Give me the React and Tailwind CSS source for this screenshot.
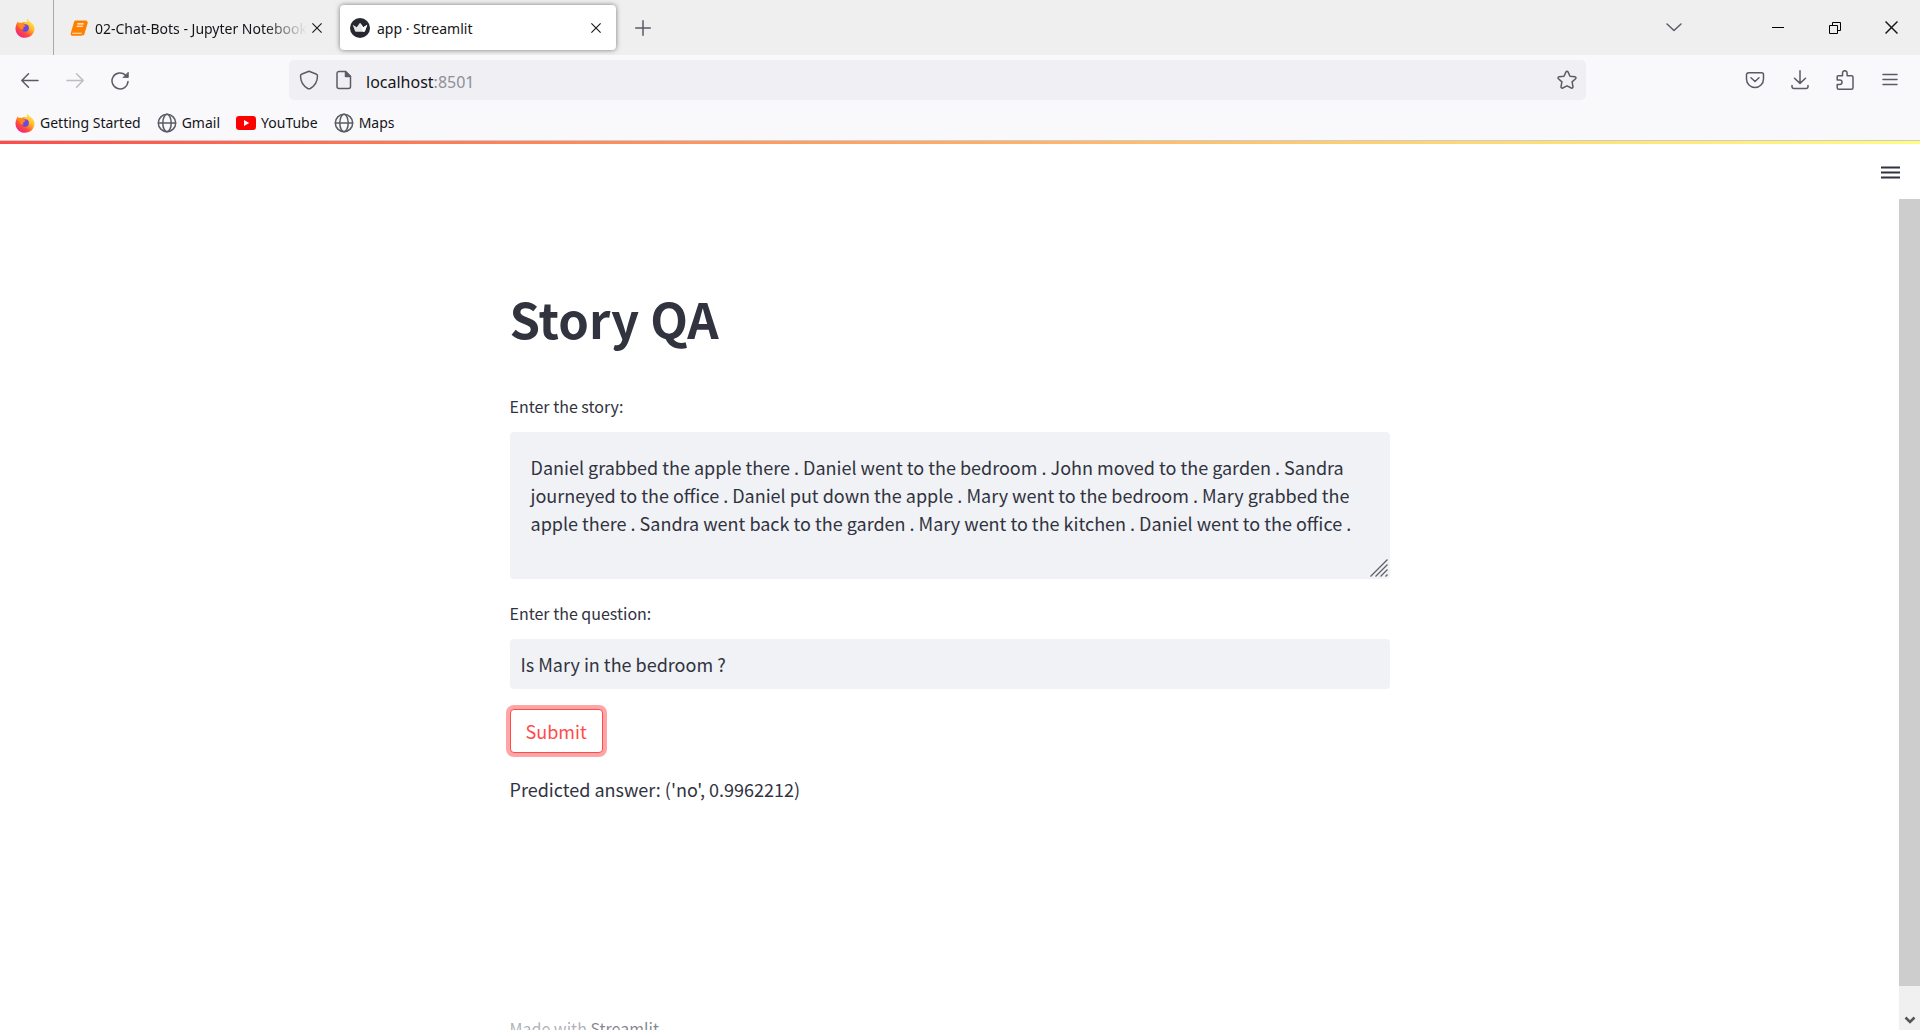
import React, { useState } from "react";

const STORY =
  "Daniel grabbed the apple there . Daniel went to the bedroom . John moved to the garden . Sandra journeyed to the office . Daniel put down the apple . Mary went to the bedroom . Mary grabbed the apple there . Sandra went back to the garden . Mary went to the kitchen . Daniel went to the office .";

function Svg({ size = 20, width = 1.5, children, className = "" }) {
  return (
    <svg
      width={size}
      height={size}
      viewBox="0 0 20 20"
      fill="none"
      stroke="currentColor"
      strokeWidth={width}
      strokeLinecap="round"
      strokeLinejoin="round"
      className={"shrink-0 " + className}
      aria-hidden="true"
    >
      {children}
    </svg>
  );
}

function FirefoxLogo() {
  return (
    <svg width="20" height="20" viewBox="0 0 20 20" className="shrink-0" aria-hidden="true">
      <defs>
        <linearGradient id="ffBody" x1="0.85" y1="0.05" x2="0.2" y2="0.95">
          <stop offset="0" stopColor="#fff44f" />
          <stop offset="0.4" stopColor="#ffb52a" />
          <stop offset="0.7" stopColor="#ff4b3a" />
          <stop offset="1" stopColor="#f0208c" />
        </linearGradient>
        <linearGradient id="ffGlobe" x1="0.7" y1="0" x2="0.3" y2="1">
          <stop offset="0" stopColor="#8a3ae8" />
          <stop offset="1" stopColor="#5a4fd8" />
        </linearGradient>
      </defs>
      <path
        d="M12.800 0.400c0.300 1.700 1.400 2.600 2.500 3.700l0.500-0.600c0.300 0.900 0.900 1.500 1.400 2.300l0.500-0.300c1 1.600 1.800 3.300 1.800 5.300 0 5-4.200 9-9.500 9S0.500 15.800 0.500 10.700C0.500 8.700 1 6.500 2 5l0.300-1.700 1.400 1.500 2.800 0.200C7.400 4.500 8.500 4 9.700 4c1.300 0 2 0.100 2.700 0.400C11.500 3 11.700 1.500 12.800 0.400z"
        fill="url(#ffBody)"
      />
      <circle cx="10.200" cy="10" r="3.700" fill="url(#ffGlobe)" />
      <path
        d="M2.500 5.500c1.500-0.900 3-0.900 4.300-0.300 0.900-0.700 2-0.900 3.400-0.700-1.300 0.700-1.900 1.500-1.900 2.400 0.700 0.300 1.700 0.300 2.300 0.500-0.200 1-1.400 1.300-2.200 1.900-0.300 0.800-0.400 1.500 0.300 2.400-2.300 0-4.200-1.700-4.700-3.500z"
        fill="#ff8a16"
      />
    </svg>
  );
}

function JupyterBook() {
  return (
    <svg width="18" height="18" viewBox="0 0 18 18" className="shrink-0" aria-hidden="true">
      <path
        d="M6 1.500h9.800c1 0 1.600 0.700 1.300 1.600L13.900 14c-0.500 1.800-1.300 2.800-2.900 2.800H2.600C1.200 16.800 0.300 15.400 0.800 13.900L4 3C4.300 2 5 1.500 6 1.500z"
        fill="#ff8000"
      />
      <path d="M7.300 4.900h6.300M6.600 7.300h6.300" stroke="#fff" strokeWidth="1.100" />
      <path d="M2.300 14.300h9.400" stroke="#ffd9b0" strokeWidth="1.200" />
      <path d="M17 3.600L13.400 15.500" stroke="#ff8000" strokeWidth="1.600" strokeLinecap="round" />
    </svg>
  );
}

function StreamlitCrown() {
  return (
    <svg width="20" height="20" viewBox="0 0 20 20" className="shrink-0" aria-hidden="true">
      <circle cx="10" cy="10" r="10" fill="#262730" />
      <path d="M2.700 6.800l4 2.400L10 4.700l3.300 4.500 4-2.400-2.300 6.200c-0.200 0.500-0.500 0.700-1 0.700H6c-0.500 0-0.800-0.200-1-0.700z" fill="#e6e6e8" />
      <path d="M10 4.700l3.300 4.500 4-2.400-2.300 6.200c-0.200 0.500-0.500 0.700-1 0.700h-1z" fill="#fff" />
    </svg>
  );
}

function Globe() {
  return (
    <Svg className="text-[#5b5b66]">
      <circle cx="10" cy="10" r="8.700" />
      <ellipse cx="10" cy="10" rx="4.200" ry="8.700" />
      <path d="M1.500 10h17" />
    </Svg>
  );
}

function YouTube() {
  return (
    <svg width="20" height="14" viewBox="0 0 20 14" className="shrink-0" aria-hidden="true">
      <rect width="20" height="14" rx="3" fill="#f00" />
      <path d="M8 4l5.200 3L8 10z" fill="#fff" />
    </svg>
  );
}

function Cross({ size = 10 }) {
  return (
    <svg width={size} height={size} viewBox="0 0 10 10" stroke="currentColor" strokeWidth="1.100" className="shrink-0" aria-hidden="true">
      <path d="M0.400 0.400l9.200 9.200M9.600 0.400l-9.200 9.200" />
    </svg>
  );
}

function IconButton({ label, className = "", children }) {
  return (
    <button type="button" aria-label={label} className={"flex shrink-0 items-center justify-center " + className}>
      {children}
    </button>
  );
}

function TabStrip() {
  return (
    <div className="flex h-[55px] items-center bg-[#efefef] text-[#15141a]">
      <IconButton label="Firefox View" className="h-full w-[54px] border-r border-[#a9a9ad] pr-1">
        <FirefoxLogo />
      </IconButton>
      <div role="tab" className="flex w-[278px] shrink-0 items-center pl-4 text-sm">
        <JupyterBook />
        <span className="ml-[7px] w-[212px] overflow-hidden pt-[2px] whitespace-nowrap [mask-image:linear-gradient(to_right,black_80%,transparent)]">
          02-Chat-Bots - Jupyter Notebook
        </span>
        <IconButton label="Close tab" className="ml-1 h-5 w-3">
          <Cross />
        </IconButton>
      </div>
      <div
        role="tab"
        aria-selected="true"
        className="ml-2 flex h-[45px] w-[276px] shrink-0 items-center rounded bg-white pr-[14px] pl-[10px] text-sm shadow-[0_0_5px_rgba(0,0,0,0.5)]"
      >
        <StreamlitCrown />
        <span className="ml-[7px] flex-1 pt-[2px]">app · Streamlit</span>
        <IconButton label="Close tab" className="h-5 w-3">
          <Cross />
        </IconButton>
      </div>
      <IconButton label="New tab" className="ml-[17px] h-5 w-5 text-[#5b5b66]">
        <Svg>
          <path d="M10 2.700v14.600M2.700 10h14.600" />
        </Svg>
      </IconButton>
      <div className="flex-1" />
      <IconButton label="List all tabs" className="mr-[55px] h-10 w-10 text-[#5b5b66]">
        <Svg>
          <path d="M3 6l7 6.500L17 6" />
        </Svg>
      </IconButton>
      <IconButton label="Minimize" className="h-full w-[57px]">
        <svg width="12" height="12" stroke="#000" aria-hidden="true">
          <path d="M0 5.500h12" />
        </svg>
      </IconButton>
      <IconButton label="Restore" className="h-full w-[57px]">
        <svg width="12" height="12" stroke="#000" fill="none" aria-hidden="true">
          <path d="M0.500 3.500h8v8h-8zM3.500 3.500v-3h8v8h-3" />
        </svg>
      </IconButton>
      <IconButton label="Close window" className="h-full w-[57px]">
        <Cross size={13} />
      </IconButton>
    </div>
  );
}

function NavBar() {
  return (
    <div className="flex h-[50px] items-center text-[#5b5b66]">
      <div className="flex w-[289px] shrink-0 pl-[7px]">
        <IconButton label="Back" className="h-10 w-[45px]">
          <Svg>
            <path d="M18 10.500H2M8.500 3.700L1.800 10.500l6.700 6.800" />
          </Svg>
        </IconButton>
        <IconButton label="Forward" className="h-10 w-[45px] text-[#bdbdc2]">
          <Svg>
            <path d="M2 10.500h16M11.500 3.700l6.700 6.800-6.700 6.800" />
          </Svg>
        </IconButton>
        <IconButton label="Reload" className="h-10 w-[45px]">
          <Svg>
            <path d="M18 11.500a8 8 0 1 1-2.500-6.400L17 6.500" />
            <path d="M18.300 2.500v5h-5z" fill="currentColor" strokeWidth="0.800" />
          </Svg>
        </IconButton>
      </div>
      <div className="flex h-10 min-w-0 flex-1 items-center rounded-[5px] bg-[#f0f0f4] px-[10px]">
        <Svg>
          <path d="M10 1.200l7 2.800c1 0.400 1.500 1 1.500 2-0.100 5.300-2.400 9.600-7.200 12.500-0.900 0.500-1.700 0.500-2.600 0C3.900 15.600 1.600 11.300 1.500 6c0-1 0.500-1.600 1.500-2z" />
        </Svg>
        <Svg className="ml-[15px]">
          <path d="M11.500 1.500H5A2 2 0 0 0 3 3.500v13a2 2 0 0 0 2 2h9.500a2 2 0 0 0 2-2v-10z" />
          <path d="M11.500 1.500v5h5z" fill="currentColor" />
        </Svg>
        <div className="relative ml-3 h-6 min-w-0 flex-1">
          <input
            aria-label="Address"
            defaultValue="localhost:8501"
            className="h-6 w-full bg-transparent text-base text-transparent outline-none"
          />
          <div aria-hidden="true" className="pointer-events-none absolute inset-0 pt-[2px] text-base leading-6 text-[#8f8f96]">
            <span className="text-[#15141a]">localhost</span>:8501
          </div>
        </div>
        <IconButton label="Bookmark this page" className="mr-[-1px] h-8 w-5">
          <Svg>
            <path d="M10 1.200c0.500 0 0.800 0.300 1 0.700l2 4.300 4.900 0.600c1.100 0.200 1.400 1.200 0.700 1.900l-3.500 3.200 0.900 4.900c0.100 1-0.800 1.600-1.700 1.200L10 15.800 5.700 18c-0.900 0.400-1.800-0.200-1.700-1.200l0.900-4.900-3.500-3.200C0.700 8 1 7 2.100 6.800L7 6.200l2-4.300c0.200-0.400 0.500-0.700 1-0.700z" />
          </Svg>
        </IconButton>
      </div>
      <div className="flex w-[334px] shrink-0 justify-end pr-2">
        <IconButton label="Save to Pocket" className="h-10 w-[45px]">
          <Svg>
            <path d="M3.500 2.800h13a2 2 0 0 1 2 2V9a8.500 8.500 0 0 1-17 0V4.800a2 2 0 0 1 2-2z" />
            <path d="M6 7.700l4 3.800 4-3.800" />
          </Svg>
        </IconButton>
        <IconButton label="Downloads" className="h-10 w-[45px]">
          <Svg>
            <path d="M10 0.800v12.500M4.500 8.200l5.500 5.200 5.500-5.200M2 15.500v1a2 2 0 0 0 2 2h12a2 2 0 0 0 2-2v-1" />
          </Svg>
        </IconButton>
        <IconButton label="Extensions" className="h-10 w-[45px]">
          <Svg>
            <path d="M3.200 5.800h4.300V3a2.300 2.300 0 0 1 4.600 0v2.800h4.400a1.500 1.500 0 0 1 1.500 1.500v10.400a1.500 1.500 0 0 1-1.500 1.500H3.700a1.500 1.500 0 0 1-1.500-1.500v-3.300h2.600a2.200 2.200 0 0 0 0-4.400H2.200V6.800a1 1 0 0 1 1-1z" />
          </Svg>
        </IconButton>
        <IconButton label="Open application menu" className="h-10 w-[45px]">
          <Svg>
            <path d="M3 4.500h14M3 9.500h14M3 14.500h14" />
          </Svg>
        </IconButton>
      </div>
    </div>
  );
}

function Bookmarks() {
  const items = [
    ["Getting Started", <FirefoxLogo />],
    ["Gmail", <Globe />],
    ["YouTube", <YouTube />],
    ["Maps", <Globe />],
  ];
  return (
    <nav aria-label="Bookmarks" className="flex h-[35px] items-center gap-4 pl-[15px] text-sm text-[#15141a]">
      {items.map(([name, icon]) => (
        <a key={name} href="#" className="flex items-center gap-[5px]">
          {icon}
          {name}
        </a>
      ))}
    </nav>
  );
}

export default function App() {
  const [story, setStory] = useState(STORY);
  const [question, setQuestion] = useState("Is Mary in the bedroom ?");

  return (
    <div className="flex h-screen flex-col overflow-hidden bg-white">
      <header className="shrink-0 border-b border-[#cccccc] bg-[#f9f9fb] font-['Noto_Sans','Open_Sans',sans-serif]">
        <TabStrip />
        <NavBar />
        <Bookmarks />
      </header>

      <div className="flex min-h-0 flex-1 flex-col font-['Noto_Sans_CJK_JP','Noto_Sans_CJK_SC',sans-serif] text-[#31333f]">
        <div className="h-[3px] shrink-0 bg-linear-to-r from-[#ff4b4b] to-[#fffd80]" />
        <div className="flex h-[55px] shrink-0 items-center justify-end pt-[2px] pr-5">
          <IconButton label="Main menu" className="h-5 w-5">
            <svg width="19" height="13" stroke="currentColor" strokeWidth="2" aria-hidden="true">
              <path d="M0 1.500h19M0 6.500h19M0 11.500h19" />
            </svg>
          </IconButton>
        </div>

        <div className="flex min-h-0 flex-1">
          <div className="min-w-0 flex-1 overflow-hidden">
            <main className="mx-auto max-w-[880px] pt-[86px]">
              <h1 className="text-[49px] leading-[66px] font-bold">Story QA</h1>
              <label htmlFor="story" className="mt-[43px] block text-base leading-6">
                Enter the story:
              </label>
              <div className="relative mt-[14px]">
                <textarea
                  id="story"
                  value={story}
                  onChange={(e) => setStory(e.target.value)}
                  className="block h-[147px] w-full resize-none rounded bg-[#f0f2f6] px-[21px] py-[21px] text-lg leading-7 outline-none"
                />
                <svg width="18" height="18" stroke="#5f6068" strokeWidth="1.300" className="pointer-events-none absolute right-[2px] bottom-[2px]" aria-hidden="true">
                  <path d="M0.500 17.500l17-17M5.500 17.500l12-12M10.500 17.500l7-7M15.500 17.500l2-2" />
                </svg>
              </div>
              <label htmlFor="question" className="mt-[22px] block text-base leading-6">
                Enter the question:
              </label>
              <input
                id="question"
                value={question}
                onChange={(e) => setQuestion(e.target.value)}
                className="mt-[14px] block h-[50px] w-full rounded bg-[#f0f2f6] px-[11px] text-lg leading-7 outline-none"
              />
              <button
                type="button"
                className="mt-5 block h-[44px] rounded border border-[#ff4b4b] bg-white px-[15px] text-lg leading-7 text-[#ff4b4b] ring-4 ring-[#ff4b4b]/50"
              >
                Submit
              </button>
              <p className="mt-[22px] text-lg leading-7">Predicted answer: ('no', 0.9962212)</p>
              <footer className="mt-[213px] text-base leading-6 text-[#31333f]/40">
                Made with{" "}
                <a href="#" className="text-[#31333f]/60">
                  Streamlit
                </a>
              </footer>
            </main>
          </div>
          <div aria-hidden="true" className="flex w-[21px] shrink-0 flex-col bg-[#f0f0f0]">
            <div className="flex-1 bg-[#cdcdcd]" />
            <div className="flex h-11 items-end justify-center pb-1">
              <svg width="12" height="12" fill="none" stroke="#555" strokeWidth="2.500">
                <path d="M1.500 3.500l4.500 4.500 4.500-4.500" />
              </svg>
            </div>
          </div>
        </div>
      </div>
    </div>
  );
}
